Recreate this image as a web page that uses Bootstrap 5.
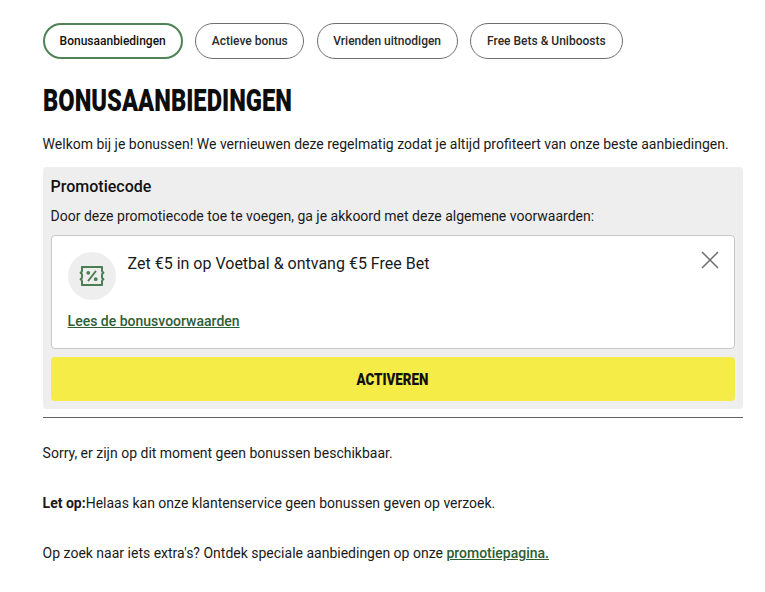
<!DOCTYPE html>
<html lang="nl">
<head>
<meta charset="utf-8">
<title>Bonusaanbiedingen</title>
<link href="https://cdn.jsdelivr.net/npm/bootstrap@5.3.0/dist/css/bootstrap.min.css" rel="stylesheet">
<style>
html, body { background: #fff; }
body { font-family: Roboto, "Liberation Sans", sans-serif; font-size: 14px; line-height: 20px; color: #1a1a1a; }
.pagewrap { padding: 23px 22px 0 42.6px; }
.pillrow { gap: 12.5px; margin-bottom: 27px; }
.pillbtn { height: 36px; padding: 0 15.5px; border: 1px solid #6f6f6f; border-radius: 18px; background: #fff; font-size: 12px; font-weight: 500; line-height: 34px; color: #2a2a2a; white-space: nowrap; }
.pillbtn:last-child { padding: 0 16px; }
.pillbtn.is-on { border: 2px solid #4f8254; padding: 0 15px; line-height: 32px; color: #111; }
.pagetitle { display: block; width: max-content; transform: scaleX(.765); transform-origin: left center; font-family: Roboto, sans-serif; font-weight: 900; font-size: 31px; line-height: 30px; margin: 0 0 18px; color: #0d0d0d; text-transform: uppercase; }
.intro { margin: 0 0 13px; }
.promobox { background: #eee; border-radius: 4px; padding: 9px 8px 8px; }
.promohead { font-size: 16px; font-weight: 500; line-height: 22px; margin: 0 0 8px; color: #111; }
.promotext { margin: 0 0 9px; line-height: 20px; }
.offercard { background: #fff; border: 1px solid #c8c8c8; border-radius: 4px; padding: 16px 16px 17px; height: 114px; }
.iconcircle { width: 48px; height: 48px; border-radius: 50%; background: #eee; flex: none; }
.offertitle { font-size: 16px; line-height: 22px; margin: 1px 0 0 12px; color: #1a1a1a; }
.closex { width: 24px; height: 24px; padding: 0; border: 0; background: none; flex: none; margin: -4px -4px 0 auto; }
.termslink { display: inline-block; font-weight: 500; color: #2f5d34; text-decoration: underline; margin-top: 11px; }
.activate { display: block; width: 100%; height: 44px; margin-top: 8px; padding: 1px 0 0; border: 0; border-radius: 4px; background: #f5ec48; color: #111; }
.activate span { display: inline-block; transform: scaleX(.81); font-family: Roboto, sans-serif; font-weight: 900; font-size: 16.500px; line-height: 43px; }
.rule { border: 0; border-top: 1px solid #666; opacity: 1; margin: 8px 0 0; }
.bodyline { margin: 0; }
.bodyline.first { margin-top: 25px; }
.bodyline.next { margin-top: 30px; }
.bodyline a { font-weight: 500; color: #2f5d34; }
</style>
</head>
<body>
<main class="pagewrap">
  <nav class="d-flex pillrow">
    <button type="button" class="pillbtn is-on">Bonusaanbiedingen</button>
    <button type="button" class="pillbtn">Actieve bonus</button>
    <button type="button" class="pillbtn">Vrienden uitnodigen</button>
    <button type="button" class="pillbtn">Free Bets &amp; Uniboosts</button>
  </nav>
  <h1 class="pagetitle">Bonusaanbiedingen</h1>
  <p class="intro">Welkom bij je bonussen! We vernieuwen deze regelmatig zodat je altijd profiteert van onze beste aanbiedingen.</p>
  <section class="promobox">
    <h2 class="promohead">Promotiecode</h2>
    <p class="promotext">Door deze promotiecode toe te voegen, ga je akkoord met deze algemene voorwaarden:</p>
    <div class="offercard">
      <div class="d-flex align-items-start">
        <div class="iconcircle d-flex align-items-center justify-content-center">
          <svg width="26" height="22" viewBox="0 0 26 22" fill="none" stroke="#4a7d50" stroke-width="2" stroke-linecap="round" stroke-linejoin="round">
            <path d="M3 2H23M3 20H23" stroke-dasharray="2.400 1"/>
            <path d="M3 2V5.500Q3 6.800 2 7.300Q1.200 7.700 2 8.200Q3 8.700 3 10V12Q3 13.300 2 13.800Q1.200 14.200 2 14.700Q3 15.200 3 16.500V20"/>
            <path d="M23 2V5.500Q23 6.800 24 7.300Q24.800 7.700 24 8.200Q23 8.700 23 10V12Q23 13.300 24 13.800Q24.800 14.200 24 14.700Q23 15.200 23 16.500V20"/>
            <path d="M9.500 15.500L16.500 6.500" stroke-width="2"/>
            <circle cx="9.300" cy="7.800" r="1" stroke-width="1.800"/>
            <circle cx="16.700" cy="14.200" r="1" stroke-width="1.800"/>
          </svg>
        </div>
        <p class="offertitle">Zet €5 in op Voetbal &amp; ontvang €5 Free Bet</p>
        <button type="button" class="closex" aria-label="Sluiten">
          <svg width="24" height="24" viewBox="0 0 24 24" fill="none" stroke="#6f6f6f" stroke-width="1.500"><path d="M4 4L20 20M20 4L4 20"/></svg>
        </button>
      </div>
      <a href="#" class="termslink">Lees de bonusvoorwaarden</a>
    </div>
    <button type="button" class="activate"><span>ACTIVEREN</span></button>
  </section>
  <hr class="rule">
  <p class="bodyline first">Sorry, er zijn op dit moment geen bonussen beschikbaar.</p>
  <p class="bodyline next"><strong>Let op:</strong>Helaas kan onze klantenservice geen bonussen geven op verzoek.</p>
  <p class="bodyline next">Op zoek naar iets extra's? Ontdek speciale aanbiedingen op onze <a href="#">promotiepagina.</a></p>
</main>
<script src="https://cdn.jsdelivr.net/npm/bootstrap@5.3.0/dist/js/bootstrap.bundle.min.js"></script>
</body>
</html>
